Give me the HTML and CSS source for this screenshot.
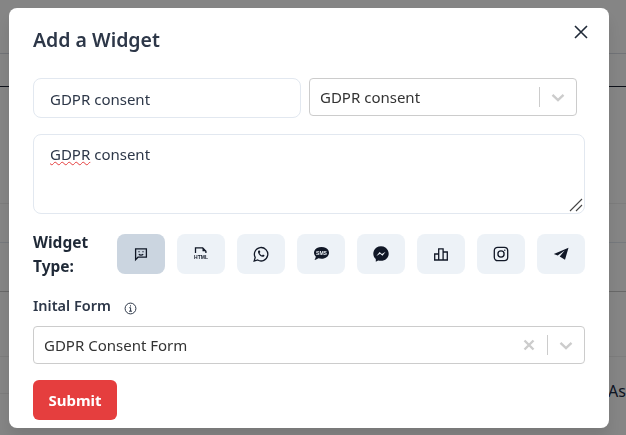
FILE: index.html
```html
<!DOCTYPE html>
<html lang="en">
<head>
    <meta charset="UTF-8">
    <meta name="viewport" content="width=device-width, initial-scale=1.0">
    <title>Add a Widget</title>
    <link rel="stylesheet" href="styles.css">
</head>
<body>

    <!-- table behind the modal -->
    <div class="page">
        <div class="row row-top"></div>
        <div class="row row-head"></div>
        <div class="row row-a"></div>
        <div class="row row-b"></div>
        <div class="row row-c"></div>
        <div class="row row-d"></div>
        <div class="row row-e">As</div>
    </div>

    <div class="overlay">
        <div class="modal">
            <div class="modal-head">
                <h2>Add a Widget</h2>
                <button class="close-btn" aria-label="Close">
                    <svg width="14" height="14" viewBox="0 0 14 14"><path d="M1 1l12 12M13 1L1 13" fill="none" stroke="#1f2937" stroke-width="1.6"/></svg>
                </button>
            </div>

            <div class="name-row">
                <input class="text-input" type="text" value="GDPR consent">
                <div class="select select-short">
                    <span class="select-value">GDPR consent</span>
                    <span class="select-sep"></span>
                    <svg class="chevron" width="20" height="20" viewBox="0 0 20 20"><path d="M4.5 7.8L10 13l5.5-5.2" fill="none" stroke="#ccc" stroke-width="2.4"/></svg>
                </div>
            </div>

            <div class="text-area">
                <span class="misspelt">GDPR</span> consent
                <svg class="resize-grip" width="14" height="14" viewBox="0 0 14 14"><path d="M1 13L13 1M7 13l6-6" fill="none" stroke="#444" stroke-width="1.1"/></svg>
            </div>

            <div class="type-row">
                <div class="type-label">Widget Type:</div>
                <div class="type-list">
                    <button class="type-btn active">
                        <svg width="16" height="16" viewBox="0 0 16 16" fill="none" stroke="#111827" stroke-width="1.3"><path d="M2.600 2.800h10.800v8.400H5l-2.400 2.400z"/><path d="M6 5.200v1M10 5.200v1M5.800 8.200c1.200 1 3.200 1 4.400 0"/></svg>
                    </button>
                    <button class="type-btn">
                        <svg width="18" height="16" viewBox="0 0 18 16" fill="none"><path d="M3.500 7V1.800h7.200l3.200 3.400V7" stroke="#111827" stroke-width="1.300"/><path d="M10.500 1.800l3.400 3.400h-3.400z" fill="#111827"/><text x="9" y="12.500" class="icon-text" text-anchor="middle">HTML</text></svg>
                    </button>
                    <button class="type-btn">
                        <svg width="16" height="16" viewBox="0 0 16 16" fill="none"><path d="M1.200 15l1-3.600A6.700 6.700 0 1 1 4.700 14z" stroke="#111827" stroke-width="1.300"/><path d="M5.600 4.600c-.9.800-.8 2 .1 3.300 1 1.500 2.300 2.600 3.900 2.900 1 .1 1.800-.4 2-1.300L10 8.500l-1 .9C8 9 7 8 6.600 7l.8-1-.7-1.500z" fill="#111827"/></svg>
                    </button>
                    <button class="type-btn">
                        <svg width="17" height="16" viewBox="0 0 16 16"><path d="M8 1C3.800 1 .5 3.500.5 6.800c0 1.500.7 2.800 1.800 3.800-.1 1.200-.7 2.500-1.300 3.400 1.500-.2 2.900-.8 3.900-1.700 1 .3 2 .5 3.100.5 4.200 0 7.500-2.600 7.500-6S12.200 1 8 1z" fill="#111827"/><text x="8" y="9" class="icon-text icon-text-light" text-anchor="middle">SMS</text></svg>
                    </button>
                    <button class="type-btn">
                        <svg width="16" height="16" viewBox="0 0 16 16"><path d="M8 .3C3.700.3.300 3.500.3 7.700c0 2.200 1 4.100 2.500 5.400v2.600l2.400-1.300c.9.200 1.800.4 2.800.4 4.300 0 7.700-3.200 7.700-7.100S12.300.3 8 .3z" fill="#111827"/><path d="M3.400 10l3.200-3.900 2.300 1.900 3.700-2.200-3.100 3.900-2.400-1.900z" fill="#edf2f7"/></svg>
                    </button>
                    <button class="type-btn">
                        <svg width="16" height="16" viewBox="0 0 16 16" fill="none" stroke="#111827" stroke-width="1.300"><path d="M1.700 14V8h4v6zM5.700 14V2.800h4.400V14zM10.100 14V6h4.200v8zM1 14h14"/></svg>
                    </button>
                    <button class="type-btn">
                        <svg width="16" height="16" viewBox="0 0 16 16" fill="none" stroke="#111827" stroke-width="1.300"><rect x="1.300" y="1.300" width="13.400" height="13.400" rx="3.400"/><circle cx="8" cy="8" r="3.100"/><circle cx="11.800" cy="4.200" r=".7" fill="#111827" stroke="none"/></svg>
                    </button>
                    <button class="type-btn">
                        <svg width="16" height="16" viewBox="0 0 16 16"><path d="M15.500 1.800L.8 8l3.900 1.600 7-5-5 6 5.300 3.200z" fill="#111827"/></svg>
                    </button>
                </div>
            </div>

            <div class="form-label">
                <span>Inital Form</span>
                <svg class="info-icon" width="13" height="13" viewBox="0 0 13 13" fill="none" stroke="#2d3748"><circle cx="6.500" cy="6.500" r="5.400"/><path d="M5.300 5.700h1.300v3.400M5 9.200h3M6.500 3.300v1.200"/></svg>
            </div>

            <div class="select select-wide">
                <span class="select-value">GDPR Consent Form</span>
                <svg class="clear" width="20" height="20" viewBox="0 0 20 20"><path d="M5.500 5.500l9 9M14.500 5.500l-9 9" fill="none" stroke="#ccc" stroke-width="2.400"/></svg>
                <span class="select-sep"></span>
                <svg class="chevron" width="20" height="20" viewBox="0 0 20 20"><path d="M4.500 7.800L10 13l5.500-5.200" fill="none" stroke="#ccc" stroke-width="2.400"/></svg>
            </div>

            <button class="submit-btn">Submit</button>
        </div>
    </div>

</body>
</html>
```

FILE: styles.css
```css
* {
    box-sizing: border-box;
}

html, body {
    height: 100%;
}

body {
    margin: 0;
    overflow: hidden;
    background-color: white;
    font-family: "Noto Sans", Arial, sans-serif;
    color: #2d3748;
}

/* page behind the overlay */
.row {
    border-bottom: 1px solid #e2e8f0;
}

.row-top { height: 54px; border-bottom-color: #d8dce4; }
.row-head { height: 33px; border-bottom-color: #1a2030; }
.row-a { height: 117px; border-bottom-color: #f0f0f0; }
.row-b { height: 39px; }
.row-c { height: 49px; border-bottom-color: #c8c8c8; }
.row-d { height: 65px; border-bottom-color: #f0f0f0; }

.row-e {
    height: 37px;
    padding-left: 608px;
    padding-top: 22px;
    font-size: 16px;
    line-height: 24px;
    white-space: nowrap;
    border-bottom-color: #f0f0f0;
    color: #1a2a44;
}

.overlay {
    position: fixed;
    top: 0;
    left: 0;
    width: 100%;
    height: 100%;
    background-color: rgba(0, 0, 0, 0.48);
}

.modal {
    width: 600px;
    height: 420px;
    margin: 8px 0 0 9px;
    padding: 16px 24px;
    background-color: white;
    border-radius: 8px;
    box-shadow: 0 10px 15px rgba(0, 0, 0, 0.1);
}

.modal-head {
    display: flex;
    justify-content: space-between;
    height: 30px;
    margin-bottom: 24px;
}

.modal-head h2 {
    margin: 0;
    font-size: 19.5px;
    font-weight: 600;
    line-height: 32px;
    color: #2d3748;
}

.close-btn {
    display: flex;
    width: 14px;
    height: 14px;
    margin: 1px -3px 0 0;
    padding: 0;
    border: none;
    background: none;
}

.name-row {
    display: flex;
    align-items: flex-start;
    gap: 8px;
    margin-bottom: 16px;
}

.text-input {
    width: 268px;
    height: 40px;
    padding: 2px 16px 0;
    border: 1px solid #e2e8f0;
    border-radius: 8px;
    outline: none;
    font: inherit;
    font-size: 15px;
    color: #2d3748;
}

.select {
    display: flex;
    align-items: center;
    height: 38px;
    padding: 0 8px 0 10px;
    border: 1px solid #ccc;
    border-radius: 4px;
    font-size: 15px;
    color: #333;
}

.select-short {
    width: 268px;
}

.select-wide {
    width: 552px;
}

.select-value {
    flex: 1;
}

.select-sep {
    width: 1px;
    height: 20px;
    margin: 0 8px;
    background-color: #ccc;
}

.text-area {
    position: relative;
    width: 552px;
    height: 80px;
    margin-bottom: 20px;
    padding: 7px 16px;
    border: 1px solid #e2e8f0;
    border-radius: 8px;
    font-size: 15px;
    line-height: 24px;
}

.misspelt {
    text-decoration: underline wavy #e53e3e 1.4px;
    text-underline-offset: 1px;
}

.resize-grip {
    position: absolute;
    right: 1px;
    bottom: 1px;
}

.type-row {
    display: flex;
    margin-bottom: 16px;
}

.type-label {
    width: 84px;
    padding-right: 20px;
    margin-top: -4px;
    font-size: 15.5px;
    font-weight: 700;
    line-height: 24px;
    color: #1f2937;
}

.type-list {
    display: flex;
    gap: 12px;
}

.type-btn {
    display: flex;
    align-items: center;
    justify-content: center;
    width: 48px;
    height: 40px;
    padding: 0;
    border: none;
    border-radius: 8px;
    background-color: #edf2f7;
}

.type-btn.active {
    background-color: #cbd5e0;
}

.icon-text {
    font-family: "Liberation Sans", Arial, sans-serif;
    font-size: 5px;
    font-weight: 700;
    fill: #111827;
}

.icon-text-light {
    fill: #edf2f7;
}

.form-label {
    display: flex;
    align-items: center;
    gap: 13px;
    height: 24px;
    margin-top: -1px;
    margin-bottom: 9px;
    font-size: 14.5px;
    font-weight: 600;
}

.info-icon {
    margin-top: 7px;
}

.submit-btn {
    display: block;
    width: 84px;
    height: 40px;
    margin-top: 16px;
    padding: 0;
    border: none;
    border-radius: 6px;
    background-color: #e53e3e;
    color: white;
    font: inherit;
    font-size: 15px;
    font-weight: 700;
}
```
